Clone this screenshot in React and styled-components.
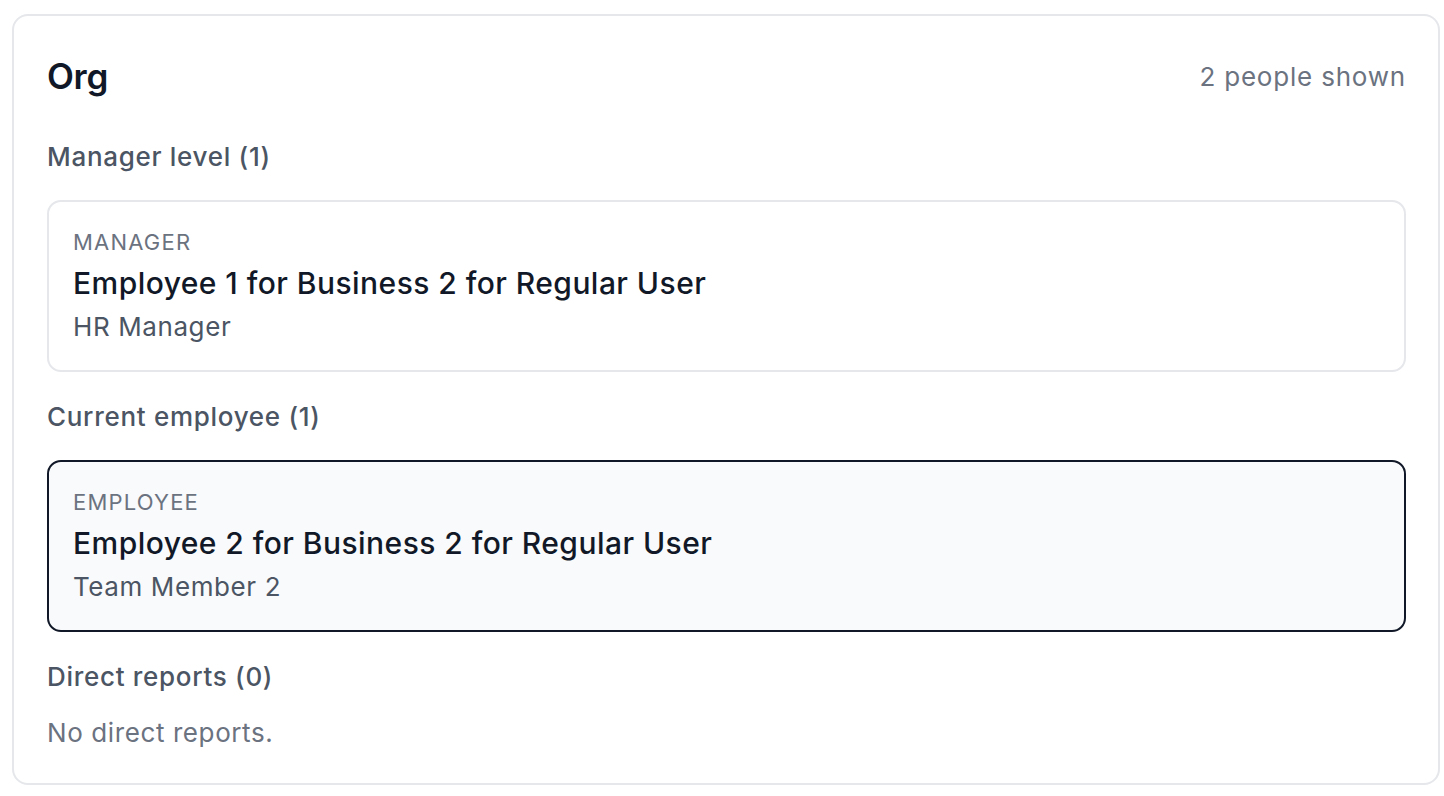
import React from "react";
import styled, { createGlobalStyle } from "styled-components";

const Global = createGlobalStyle`
  html, body { margin: 0; padding: 0; background: #ffffff; }
  body { font-family: Inter, "Noto Sans", sans-serif; -webkit-font-smoothing: antialiased; }
  * { box-sizing: border-box; }
`;

const Page = styled.div`
  padding: 14px 4px 0 12px;
`;

const Panel = styled.section`
  border: 2px solid #e5e7eb;
  border-radius: 16px;
  background: #ffffff;
  padding: 32px 32px 30px 33px;
  display: flex;
  flex-direction: column;
`;

const Header = styled.div`
  display: flex;
  align-items: center;
  justify-content: space-between;
  height: 56px;
  margin-bottom: 33px;
`;

const Title = styled.h2`
  margin: 0;
  font-size: 35px;
  font-weight: 600;
  color: #111827;
  letter-spacing: -0.3px;
`;

const Count = styled.span`
  font-size: 26px;
  letter-spacing: 0.8px;
  color: #6b7280;
`;

const Sections = styled.div`
  display: flex;
  flex-direction: column;
  gap: 25px;
`;

const Section = styled.div`
  display: flex;
  flex-direction: column;
  gap: ${(p) => p.$gap || 23}px;
`;

const SectionLabel = styled.div`
  font-size: 26px;
  line-height: 40px;
  font-weight: 450;
  letter-spacing: 0.7px;
  color: #4b5563;
`;

const PersonCard = styled.div`
  border: 2px solid ${(p) => (p.$current ? "#111827" : "#e5e7eb")};
  background: ${(p) => (p.$current ? "#f9fafb" : "#ffffff")};
  border-radius: 14px;
  padding: 24px;
  display: flex;
  flex-direction: column;
`;

const Role = styled.div`
  font-size: 22px;
  line-height: 32px;
  color: #6b7280;
  text-transform: uppercase;
  letter-spacing: 1.2px;
`;

const Name = styled.div`
  font-size: 30px;
  line-height: 50px;
  font-weight: 500;
  letter-spacing: 0.45px;
  color: #111827;
`;

const JobTitle = styled.div`
  font-size: 26px;
  line-height: 38px;
  letter-spacing: 0.6px;
  color: #4b5563;
`;

const Empty = styled.div`
  font-size: 26px;
  line-height: 40px;
  letter-spacing: 0.6px;
  color: #6b7280;
`;

const people = {
  manager: { role: "Manager", name: "Employee 1 for Business 2 for Regular User", title: "HR Manager" },
  current: { role: "Employee", name: "Employee 2 for Business 2 for Regular User", title: "Team Member 2" },
};

function Person({ data, current }) {
  return (
    <PersonCard $current={current}>
      <Role>{data.role}</Role>
      <Name>{data.name}</Name>
      <JobTitle>{data.title}</JobTitle>
    </PersonCard>
  );
}

export default function App() {
  return (
    <>
      <Global />
      <Page>
        <Panel>
          <Header>
            <Title>Org</Title>
            <Count>2 people shown</Count>
          </Header>
          <Sections>
            <Section>
              <SectionLabel>Manager level (1)</SectionLabel>
              <Person data={people.manager} />
            </Section>
            <Section>
              <SectionLabel>Current employee (1)</SectionLabel>
              <Person data={people.current} current />
            </Section>
            <Section $gap={16}>
              <SectionLabel>Direct reports (0)</SectionLabel>
              <Empty>No direct reports.</Empty>
            </Section>
          </Sections>
        </Panel>
      </Page>
    </>
  );
}
